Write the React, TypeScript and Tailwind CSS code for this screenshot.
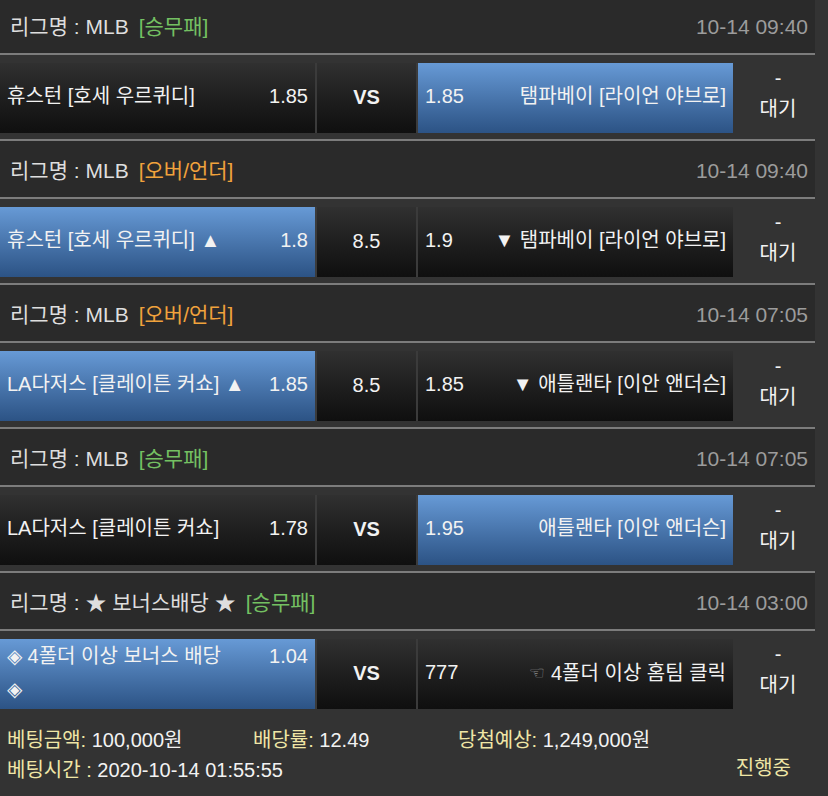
import React from 'react';

type Side = {
  name: string[];
  odds: string;
  picked?: boolean;
};

type Bet = {
  league: string;
  kind: string;
  kindColor: string;
  time: string;
  home: Side;
  middle: string;
  middleBold?: boolean;
  away: Side;
  awayHint?: boolean;
};

const bets: Bet[] = [
  {
    league: 'MLB',
    kind: '[승무패]',
    kindColor: 'text-[#74c062]',
    time: '10-14 09:40',
    home: { name: ['휴스턴 [호세 우르퀴디]'], odds: '1.85' },
    middle: 'VS',
    middleBold: true,
    away: { name: ['탬파베이 [라이언 야브로]'], odds: '1.85', picked: true },
  },
  {
    league: 'MLB',
    kind: '[오버/언더]',
    kindColor: 'text-[#f0a23c]',
    time: '10-14 09:40',
    home: { name: ['휴스턴 [호세 우르퀴디] ▲'], odds: '1.8', picked: true },
    middle: '8.5',
    away: { name: ['▼ 탬파베이 [라이언 야브로]'], odds: '1.9' },
  },
  {
    league: 'MLB',
    kind: '[오버/언더]',
    kindColor: 'text-[#f0a23c]',
    time: '10-14 07:05',
    home: { name: ['LA다저스 [클레이튼 커쇼] ▲'], odds: '1.85', picked: true },
    middle: '8.5',
    away: { name: ['▼ 애틀랜타 [이안 앤더슨]'], odds: '1.85' },
  },
  {
    league: 'MLB',
    kind: '[승무패]',
    kindColor: 'text-[#74c062]',
    time: '10-14 07:05',
    home: { name: ['LA다저스 [클레이튼 커쇼]'], odds: '1.78' },
    middle: 'VS',
    middleBold: true,
    away: { name: ['애틀랜타 [이안 앤더슨]'], odds: '1.95', picked: true },
  },
  {
    league: '★ 보너스배당 ★',
    kind: '[승무패]',
    kindColor: 'text-[#74c062]',
    time: '10-14 03:00',
    home: { name: ['◈ 4폴더 이상 보너스 배당', '◈'], odds: '1.04', picked: true },
    middle: 'VS',
    middleBold: true,
    away: { name: ['4폴더 이상 홈팀 클릭'], odds: '777' },
    awayHint: true,
  },
];

const cellBg = (picked?: boolean) =>
  picked
    ? 'bg-gradient-to-b from-[#679ad6] to-[#2c5385]'
    : 'bg-gradient-to-b from-[#303030] to-[#0f0f0f]';

const BetBlock: React.FC<{ bet: Bet }> = ({ bet }) => (
  <div>
    <div className="w-[815px] h-[60px] border-y-2 border-[#7c7c7c] bg-[#2a2a2a] flex items-center justify-between pl-[10px] pr-[7px] pt-[3px] leading-[28px] text-[21px]">
      <div className="text-[#dedede]">
        리그명 : {bet.league}
        <span className={`ml-[10px] ${bet.kindColor}`}>{bet.kind}</span>
      </div>
      <div className="text-[#9c9c9c]">{bet.time}</div>
    </div>

    <div className="mt-[8px] mb-[6px] min-h-[70px] flex">
      <div className="flex gap-[2px] bg-[#3b3b3b]">
        {/* home */}
        <div className={`w-[315px] flex items-center px-[7px] pb-[3px] ${cellBg(bet.home.picked)}`}>
          <div className="w-full flex items-start justify-between leading-[33px]">
            <div>
              {bet.home.name.map((line, i) => (
                <div key={i}>{line}</div>
              ))}
            </div>
            <div className="shrink-0 pl-[12px]">{bet.home.odds}</div>
          </div>
        </div>

        {/* middle */}
        <div
          className={`w-[99px] flex items-center justify-center pb-[2px] ${cellBg(false)} ${
            bet.middleBold ? 'font-bold' : ''
          }`}
        >
          {bet.middle}
        </div>

        {/* away */}
        <div className={`w-[315px] flex items-center px-[7px] pb-[3px] ${cellBg(bet.away.picked)}`}>
          <div className="w-full flex items-start justify-between leading-[33px]">
            <div className="shrink-0 pr-[12px]">{bet.away.odds}</div>
            <div className="text-right">
              {bet.awayHint && (
                <span className="text-[#8c8c8c] text-[18px] mr-[6px] align-[1px] font-['DejaVu_Sans',sans-serif]">
                  ☜
                </span>
              )}
              {bet.away.name.map((line, i) => (
                <span key={i}>{line}</span>
              ))}
            </div>
          </div>
        </div>
      </div>

      {/* status */}
      <div className="w-[90px] text-center leading-[31px]">
        <div>-</div>
        <div>대기</div>
      </div>
    </div>
  </div>
);

export default function App() {
  return (
    <div className="min-h-screen w-[828px] bg-[#333333] text-[#f2f2f2] text-[20px] font-['Liberation_Sans','Noto_Sans_CJK_KR',sans-serif] overflow-hidden">
      <div className="-mt-[5px]">
        {bets.map((bet, i) => (
          <BetBlock key={i} bet={bet} />
        ))}
      </div>

      <div className="pt-[10px] pl-[7px] pr-[37px] leading-[30px]">
        <div className="flex">
          <div className="w-[246px]">
            <span className="text-[#efe6a6]">베팅금액: </span>100,000원
          </div>
          <div className="w-[205px]">
            <span className="text-[#efe6a6]">배당률: </span>12.49
          </div>
          <div>
            <span className="text-[#efe6a6]">당첨예상: </span>1,249,000원
          </div>
        </div>
        <div className="flex justify-between">
          <div>
            <span className="text-[#efe6a6]">베팅시간 : </span>2020-10-14 01:55:55
          </div>
          <div className="text-[#efe6a6] -mt-[2px]">진행중</div>
        </div>
      </div>
    </div>
  );
}
